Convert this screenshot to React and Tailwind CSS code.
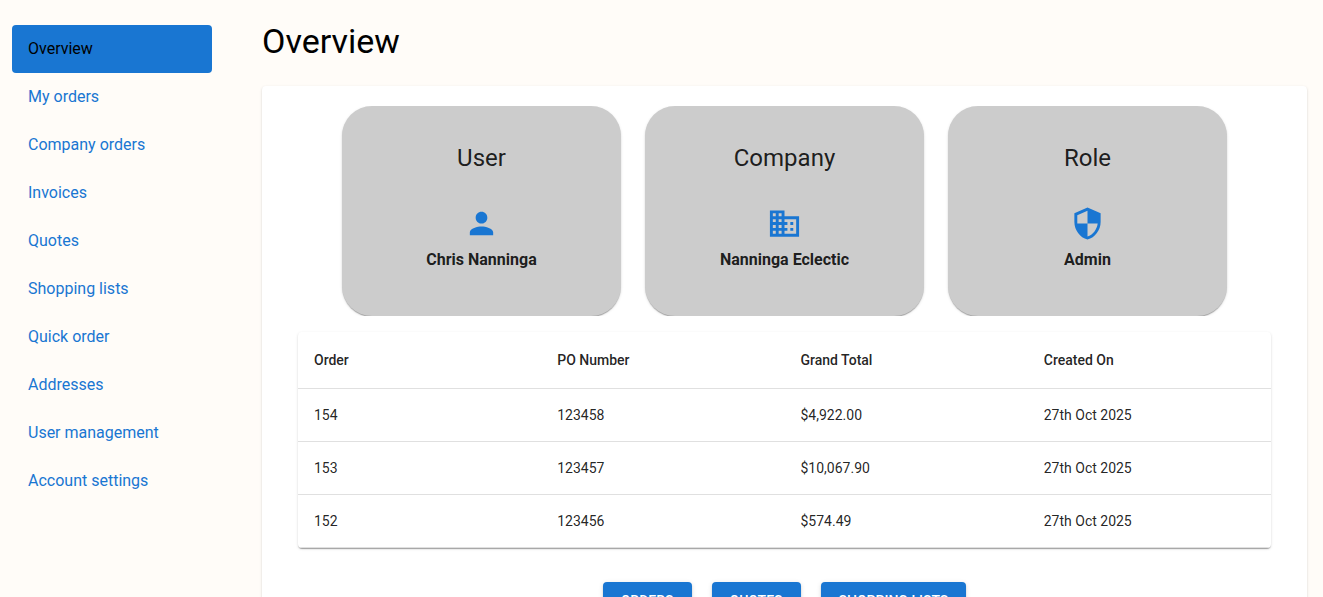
import { MdBusiness, MdPerson, MdSecurity } from "react-icons/md";

const navItems = [
  "Overview",
  "My orders",
  "Company orders",
  "Invoices",
  "Quotes",
  "Shopping lists",
  "Quick order",
  "Addresses",
  "User management",
  "Account settings",
];

const cards = [
  { title: "User", value: "Chris Nanninga", Icon: MdPerson },
  { title: "Company", value: "Nanninga Eclectic", Icon: MdBusiness },
  { title: "Role", value: "Admin", Icon: MdSecurity },
];

const columns = ["Order", "PO Number", "Grand Total", "Created On"];

const orders = [
  ["154", "123458", "$4,922.00", "27th Oct 2025"],
  ["153", "123457", "$10,067.90", "27th Oct 2025"],
  ["152", "123456", "$574.49", "27th Oct 2025"],
];

const actions = ["Orders", "Quotes", "Shopping lists"];

function Sidebar() {
  return (
    <nav aria-label="Account" className="w-[200px] shrink-0 pt-[25px]">
      <ul>
        {navItems.map((item, i) => (
          <li key={item}>
            <a
              href="#"
              aria-current={i === 0 ? "page" : undefined}
              className={
                i === 0
                  ? "flex h-12 items-center rounded bg-[#1976d2] px-4 text-base text-black"
                  : "flex h-12 items-center rounded px-4 text-base text-[#1976d2]"
              }
            >
              {item}
            </a>
          </li>
        ))}
      </ul>
    </nav>
  );
}

function InfoCard({ title, value, Icon }) {
  return (
    <article className="flex flex-col items-center rounded-[30px] bg-[#ccc] px-4 pt-9 pb-11 text-black/87 shadow-[0_2px_1px_-1px_rgba(0,0,0,0.2),0_1px_1px_rgba(0,0,0,0.14),0_1px_3px_rgba(0,0,0,0.12)]">
      <h2 className="text-2xl">{title}</h2>
      <Icon aria-hidden="true" className="mt-8 mb-[7px] size-[35px] text-[#1976d2]" />
      <p className="text-base font-bold">{value}</p>
    </article>
  );
}

function OrdersTable() {
  return (
    <div className="mt-4 overflow-hidden rounded bg-white shadow-[0_2px_1px_-1px_rgba(0,0,0,0.2),0_1px_1px_rgba(0,0,0,0.14),0_1px_3px_rgba(0,0,0,0.12)]">
      <table className="w-full table-fixed text-left text-sm text-black/87">
        <thead>
          <tr className="border-b border-[#e0e0e0]">
            {columns.map((column) => (
              <th key={column} scope="col" className="h-14 px-4 font-medium">
                {column}
              </th>
            ))}
          </tr>
        </thead>
        <tbody>
          {orders.map((row) => (
            <tr key={row[0]} className="border-b border-[#e0e0e0]">
              {row.map((cell, i) => (
                <td key={columns[i]} className="px-4 py-4">
                  {cell}
                </td>
              ))}
            </tr>
          ))}
        </tbody>
      </table>
    </div>
  );
}

export default function App() {
  return (
    <div className="flex min-h-screen gap-[50px] bg-[#fffcf8] pr-4 pl-3 font-[Roboto,sans-serif]">
      <Sidebar />
      <main className="flex min-w-0 flex-1 flex-col pt-5">
        <h1 className="mb-6 text-[34px] leading-[42px] text-black">Overview</h1>
        <section className="flex-1 rounded bg-white px-9 pt-5 pb-10 shadow-[0_2px_1px_-1px_rgba(0,0,0,0.2),0_1px_1px_rgba(0,0,0,0.14),0_1px_3px_rgba(0,0,0,0.12)]">
          <div className="grid grid-cols-3 gap-6 overflow-hidden px-11">
            {cards.map((card) => (
              <InfoCard key={card.title} {...card} />
            ))}
          </div>
          <OrdersTable />
          <div className="mt-[34px] flex justify-center gap-5">
            {actions.map((action) => (
              <button
                key={action}
                type="button"
                className="rounded bg-[#1976d2] px-[18px] py-[6px] text-sm leading-[26px] font-medium text-white uppercase shadow-[0_3px_1px_-2px_rgba(0,0,0,0.2),0_2px_2px_rgba(0,0,0,0.14),0_1px_5px_rgba(0,0,0,0.12)]"
              >
                {action}
              </button>
            ))}
          </div>
        </section>
      </main>
    </div>
  );
}
